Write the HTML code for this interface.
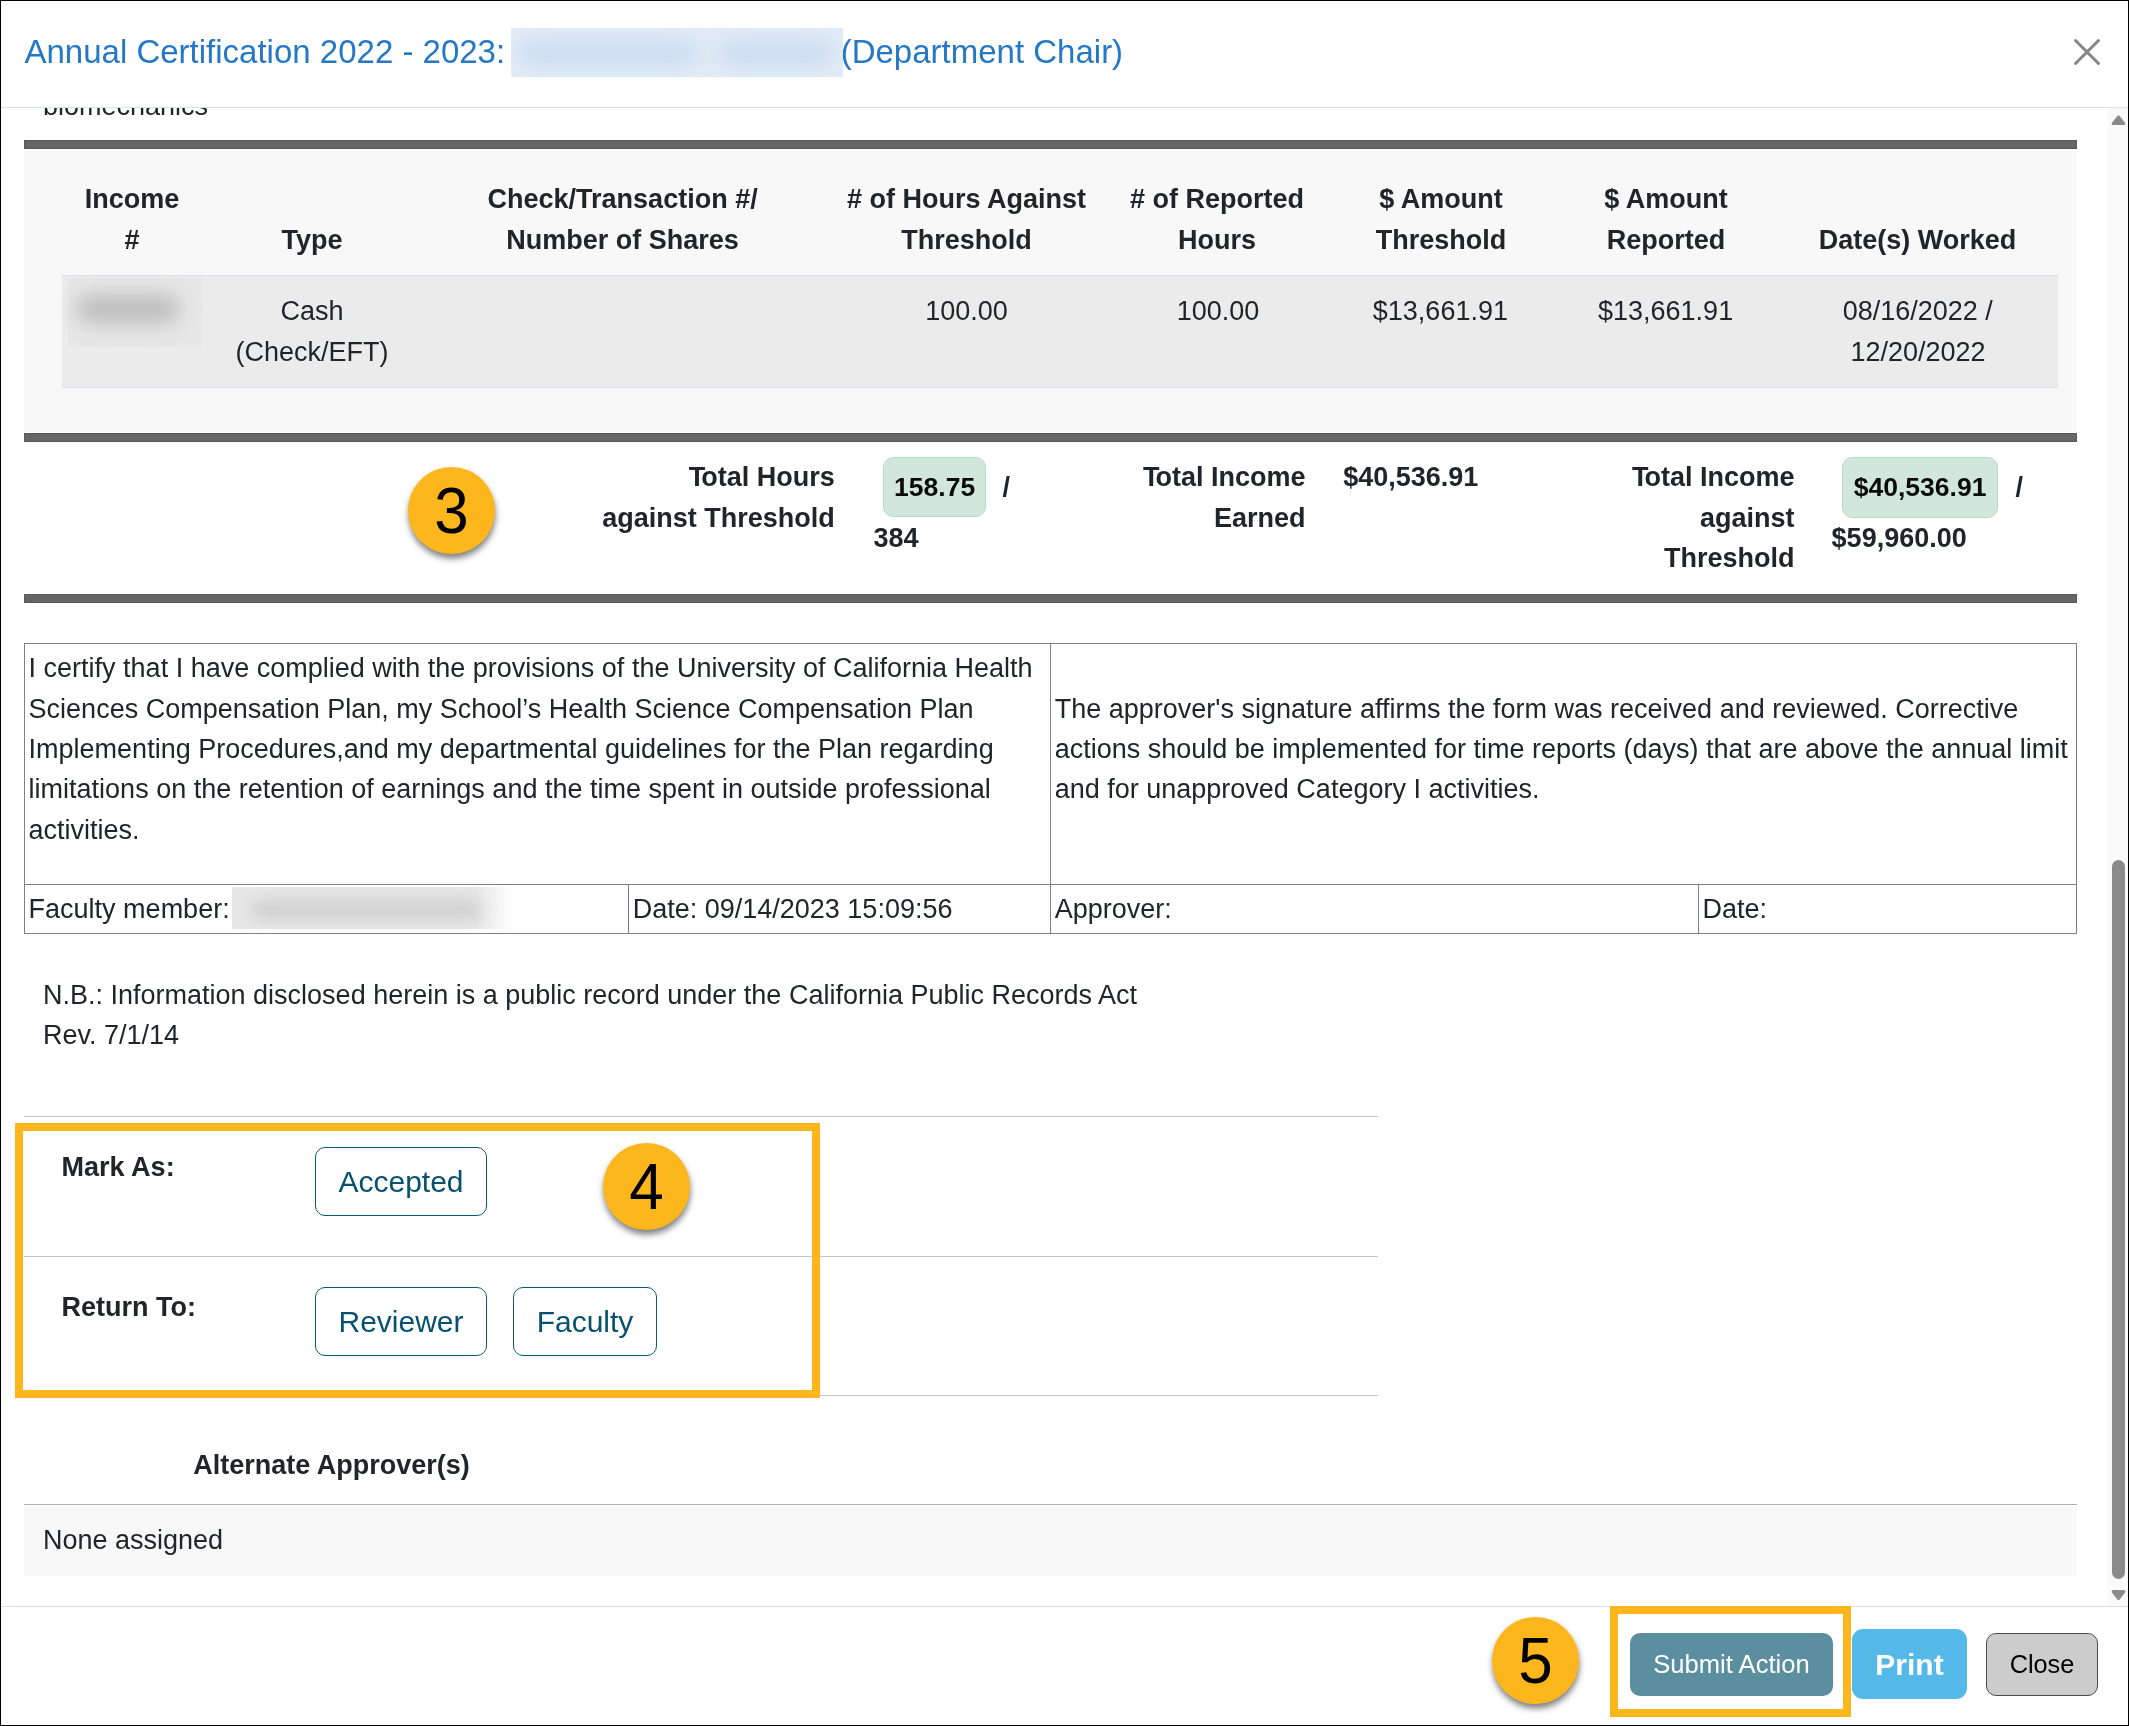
<!DOCTYPE html>
<html lang="en"><head><meta charset="utf-8"><title>Annual Certification</title>
<style>
html,body{margin:0;padding:0;background:#fff;}
body{width:2129px;height:1726px;overflow:hidden;position:relative;font-family:"Liberation Sans",sans-serif;color:#212529;}
.t{position:absolute;white-space:nowrap;margin:0;padding:0;}
.b{position:absolute;box-sizing:border-box;}
.btn{position:absolute;box-sizing:border-box;text-align:center;white-space:nowrap;}
.circ{position:absolute;border-radius:50%;background:#fdb71c;box-shadow:0.5px 4.5px 6px rgba(0,0,0,.5);text-align:center;color:#000;}
svg{position:absolute;overflow:visible;}
</style></head><body>
<div id="root" style="position:absolute;left:0;top:0;width:2129px;height:1726px;will-change:transform;">

<div class="b" style="left:0;top:108px;width:2129px;height:1498px;overflow:hidden;">
<div class="b" style="left:0;top:-108px;width:2129px;height:1726px;">
<div class="t" style="left:43.00px;top:86.24px;font-size:27px;line-height:40.5px;">biomechanics</div>
<div class="b" style="left:24.00px;top:140.00px;width:2053.00px;height:9.00px;background:#666666;border:1px solid #595959;"></div>
<div class="b" style="left:24.00px;top:150.00px;width:2053.00px;height:282.00px;background:#f8f8f8;"></div>
<div class="b" style="left:24.00px;top:433.00px;width:2053.00px;height:9.00px;background:#666666;border:1px solid #595959;"></div>
<div class="b" style="left:24.00px;top:594.00px;width:2053.00px;height:9.00px;background:#666666;border:1px solid #595959;"></div>
<div class="b" style="left:62.00px;top:275.00px;width:1996.00px;height:113.00px;background:#ebebeb;border-top:1px solid #dee2e6;border-bottom:1px solid #dee2e6;"></div>
<div class="t" style="left:132.00px;top:179.24px;font-size:27px;line-height:40.5px;font-weight:700;transform:translateX(-50%);">Income</div>
<div class="t" style="left:132.00px;top:219.74px;font-size:27px;line-height:40.5px;font-weight:700;transform:translateX(-50%);">#</div>
<div class="t" style="left:312.00px;top:219.74px;font-size:27px;line-height:40.5px;font-weight:700;transform:translateX(-50%);">Type</div>
<div class="t" style="left:622.60px;top:179.24px;font-size:27px;line-height:40.5px;font-weight:700;transform:translateX(-50%);">Check/Transaction #/</div>
<div class="t" style="left:622.60px;top:219.74px;font-size:27px;line-height:40.5px;font-weight:700;transform:translateX(-50%);">Number of Shares</div>
<div class="t" style="left:966.60px;top:179.24px;font-size:27px;line-height:40.5px;font-weight:700;transform:translateX(-50%);"># of Hours Against</div>
<div class="t" style="left:966.60px;top:219.74px;font-size:27px;line-height:40.5px;font-weight:700;transform:translateX(-50%);">Threshold</div>
<div class="t" style="left:1217.00px;top:179.24px;font-size:27px;line-height:40.5px;font-weight:700;transform:translateX(-50%);"># of Reported</div>
<div class="t" style="left:1217.00px;top:219.74px;font-size:27px;line-height:40.5px;font-weight:700;transform:translateX(-50%);">Hours</div>
<div class="t" style="left:1441.00px;top:179.24px;font-size:27px;line-height:40.5px;font-weight:700;transform:translateX(-50%);">$ Amount</div>
<div class="t" style="left:1441.00px;top:219.74px;font-size:27px;line-height:40.5px;font-weight:700;transform:translateX(-50%);">Threshold</div>
<div class="t" style="left:1666.00px;top:179.24px;font-size:27px;line-height:40.5px;font-weight:700;transform:translateX(-50%);">$ Amount</div>
<div class="t" style="left:1666.00px;top:219.74px;font-size:27px;line-height:40.5px;font-weight:700;transform:translateX(-50%);">Reported</div>
<div class="t" style="left:1917.50px;top:219.74px;font-size:27px;line-height:40.5px;font-weight:700;transform:translateX(-50%);">Date(s) Worked</div>
<div class="t" style="left:312.00px;top:291.24px;font-size:27px;line-height:40.5px;transform:translateX(-50%);">Cash</div>
<div class="t" style="left:312.00px;top:331.74px;font-size:27px;line-height:40.5px;transform:translateX(-50%);">(Check/EFT)</div>
<div class="t" style="left:966.60px;top:291.24px;font-size:27px;line-height:40.5px;transform:translateX(-50%);">100.00</div>
<div class="t" style="left:1218.00px;top:291.24px;font-size:27px;line-height:40.5px;transform:translateX(-50%);">100.00</div>
<div class="t" style="left:1440.40px;top:291.24px;font-size:27px;line-height:40.5px;transform:translateX(-50%);">$13,661.91</div>
<div class="t" style="left:1665.60px;top:291.24px;font-size:27px;line-height:40.5px;transform:translateX(-50%);">$13,661.91</div>
<div class="t" style="left:1917.80px;top:291.24px;font-size:27px;line-height:40.5px;transform:translateX(-50%);">08/16/2022 /</div>
<div class="t" style="left:1918.00px;top:331.74px;font-size:27px;line-height:40.5px;transform:translateX(-50%);">12/20/2022</div>
<div class="b" style="left:68.20px;top:278.20px;width:134.40px;height:68.50px;background:#e7e7e7;"></div>
<div class="b" style="left:76px;top:294px;width:104px;height:30px;border-radius:15px;background:#b8b8b8;filter:blur(10px);opacity:.85;"></div>
<div class="t" style="left:834.80px;top:457.44px;font-size:27px;line-height:40.5px;font-weight:700;transform:translateX(-100%);"><span style="letter-spacing:-3.9px">T</span>otal Hours</div>
<div class="t" style="left:834.80px;top:497.94px;font-size:27px;line-height:40.5px;font-weight:700;transform:translateX(-100%);">against Threshold</div>
<div class="t" style="left:1305.60px;top:457.44px;font-size:27px;line-height:40.5px;font-weight:700;transform:translateX(-100%);"><span style="letter-spacing:-3.9px">T</span>otal Income</div>
<div class="t" style="left:1305.60px;top:497.94px;font-size:27px;line-height:40.5px;font-weight:700;transform:translateX(-100%);">Earned</div>
<div class="t" style="left:1343.20px;top:457.44px;font-size:27px;line-height:40.5px;font-weight:700;">$40,536.91</div>
<div class="t" style="left:1794.50px;top:457.44px;font-size:27px;line-height:40.5px;font-weight:700;transform:translateX(-100%);"><span style="letter-spacing:-3.9px">T</span>otal Income</div>
<div class="t" style="left:1794.50px;top:497.94px;font-size:27px;line-height:40.5px;font-weight:700;transform:translateX(-100%);">against</div>
<div class="t" style="left:1794.50px;top:538.44px;font-size:27px;line-height:40.5px;font-weight:700;transform:translateX(-100%);">Threshold</div>
<div class="b" style="left:883.40px;top:457.40px;width:102.50px;height:60.00px;background:#d1e7dd;border:1px solid #badbcc;border-radius:10px;"></div>
<div class="t" style="left:934.60px;top:466.82px;font-size:26.5px;line-height:40.5px;font-weight:700;color:#0a0a0a;transform:translateX(-50%);">158.75</div>
<div class="t" style="left:1002.60px;top:467.34px;font-size:27px;line-height:40.5px;font-weight:700;">/</div>
<div class="t" style="left:873.40px;top:517.84px;font-size:27px;line-height:40.5px;font-weight:700;">384</div>
<div class="b" style="left:1842.10px;top:457.40px;width:156.00px;height:60.20px;background:#d1e7dd;border:1px solid #badbcc;border-radius:10px;"></div>
<div class="t" style="left:1920.10px;top:466.82px;font-size:26.5px;line-height:40.5px;font-weight:700;color:#0a0a0a;transform:translateX(-50%);">$40,536.91</div>
<div class="t" style="left:2015.60px;top:467.34px;font-size:27px;line-height:40.5px;font-weight:700;">/</div>
<div class="t" style="left:1831.60px;top:517.84px;font-size:27px;line-height:40.5px;font-weight:700;">$59,960.00</div>
<div class="b" style="left:24.20px;top:643.20px;width:2053.20px;height:291.00px;border:1px solid #808080;"></div>
<div class="b" style="left:24.20px;top:884.10px;width:2053.20px;height:1.00px;background:#808080;"></div>
<div class="b" style="left:1050.20px;top:643.20px;width:1.00px;height:291.00px;background:#808080;"></div>
<div class="b" style="left:628.20px;top:884.10px;width:1.00px;height:50.10px;background:#808080;"></div>
<div class="b" style="left:1697.80px;top:884.10px;width:1.00px;height:50.10px;background:#808080;"></div>
<div class="t" style="left:28.60px;top:648.14px;font-size:27px;line-height:40.5px;">I certify that I have complied with the provisions of the University of California Health</div>
<div class="t" style="left:28.60px;top:688.59px;font-size:27px;line-height:40.5px;">Sciences Compensation Plan, my School&rsquo;s Health Science Compensation Plan</div>
<div class="t" style="left:28.60px;top:729.04px;font-size:27px;line-height:40.5px;">Implementing Procedures,and my departmental guidelines for the Plan regarding</div>
<div class="t" style="left:28.60px;top:769.49px;font-size:27px;line-height:40.5px;">limitations on the retention of earnings and the time spent in outside professional</div>
<div class="t" style="left:28.60px;top:809.94px;font-size:27px;line-height:40.5px;">activities.</div>
<div class="t" style="left:1054.70px;top:688.59px;font-size:27px;line-height:40.5px;">The approver's signature affirms the form was received and reviewed. Corrective</div>
<div class="t" style="left:1054.70px;top:729.04px;font-size:27px;line-height:40.5px;">actions should be implemented for time reports (days) that are above the annual limit</div>
<div class="t" style="left:1054.70px;top:769.49px;font-size:27px;line-height:40.5px;">and for unapproved Category I activities.</div>
<div class="t" style="left:28.60px;top:889.14px;font-size:27px;line-height:40.5px;">Faculty member:</div>
<div class="t" style="left:632.70px;top:889.14px;font-size:27px;line-height:40.5px;">Date: 09/14/2023 15:09:56</div>
<div class="t" style="left:1054.70px;top:889.14px;font-size:27px;line-height:40.5px;">Approver:</div>
<div class="t" style="left:1702.40px;top:889.14px;font-size:27px;line-height:40.5px;">Date:</div>
<div class="b" style="left:231.9px;top:886.9px;width:283px;height:42px;background:linear-gradient(to right,#e7e7e7 0,#e7e7e7 86%,rgba(231,231,231,0) 100%);"></div>
<div class="b" style="left:250px;top:900px;width:232px;height:20px;border-radius:10px;background:#cecece;filter:blur(8px);opacity:.9;"></div>
<div class="t" style="left:43.00px;top:974.94px;font-size:27px;line-height:40.5px;">N.B.: Information disclosed herein is a public record under the California Public Records Act</div>
<div class="t" style="left:43.00px;top:1015.44px;font-size:27px;line-height:40.5px;">Rev. 7/1/14</div>
<div class="b" style="left:24.00px;top:1116.00px;width:1354.00px;height:1.00px;background:#c6c6c6;"></div>
<div class="b" style="left:24.00px;top:1256.00px;width:1354.00px;height:1.00px;background:#c6c6c6;"></div>
<div class="b" style="left:24.00px;top:1395.00px;width:1354.00px;height:1.00px;background:#c6c6c6;"></div>
<div class="t" style="left:61.60px;top:1146.84px;font-size:27px;line-height:40.5px;font-weight:700;">Mark As:</div>
<div class="t" style="left:61.60px;top:1287.24px;font-size:27px;line-height:40.5px;font-weight:700;">Return To:</div>
<div class="btn" style="left:315px;top:1147px;width:172px;height:69px;border:1px solid #0e5975;border-radius:10px;background:#fff;"></div>
<div class="t" style="left:401.00px;top:1160.15px;font-size:30px;line-height:44px;color:#06516d;transform:translateX(-50%);">Accepted</div>
<div class="btn" style="left:315px;top:1287px;width:172px;height:69px;border:1px solid #0e5975;border-radius:10px;background:#fff;"></div>
<div class="t" style="left:401.00px;top:1300.05px;font-size:30px;line-height:44px;color:#06516d;transform:translateX(-50%);">Reviewer</div>
<div class="btn" style="left:513px;top:1287px;width:144px;height:69px;border:1px solid #0e5975;border-radius:10px;background:#fff;"></div>
<div class="t" style="left:585.00px;top:1300.05px;font-size:30px;line-height:44px;color:#06516d;transform:translateX(-50%);">Faculty</div>
<div class="b" style="left:15.00px;top:1123.00px;width:805.00px;height:275.00px;border:8px solid #fdb71c;"></div>
<div class="circ" style="left:408.00px;top:467.10px;width:87px;height:87px;font-size:62px;line-height:87px;"><span style="display:inline-block;transform:scale(1,1.05);">3</span></div>
<div class="circ" style="left:603.00px;top:1143.00px;width:87px;height:87px;font-size:62px;line-height:87px;"><span style="display:inline-block;transform:scale(1,1.05);">4</span></div>
<div class="t" style="left:193.30px;top:1445.24px;font-size:27px;line-height:40.5px;font-weight:700;">Alternate Approver(s)</div>
<div class="b" style="left:24.00px;top:1504.00px;width:2053.00px;height:1.00px;background:#b0b0b0;"></div>
<div class="b" style="left:24.00px;top:1506.00px;width:2053.00px;height:70.00px;background:#f8f8f8;"></div>
<div class="t" style="left:43.00px;top:1519.84px;font-size:27px;line-height:40.5px;">None assigned</div>
</div></div>
<div class="b" style="left:2107.30px;top:108.00px;width:20.70px;height:1498.00px;background:#fafafa;"></div>
<div class="b" style="left:2112.00px;top:860.00px;width:13.00px;height:719.00px;background:#8b8b8b;border-radius:6.5px;"></div>
<svg style="left:2107px;top:108px" width="21" height="1498"><path d="M11.5 8.9 L16.9 15.6 L6.1 15.6 Z" fill="#8b8b8b" stroke="#8b8b8b" stroke-width="3" stroke-linejoin="round"/><path d="M11.5 1490.6 L16.9 1483.6 L6.1 1483.6 Z" fill="#8b8b8b" stroke="#8b8b8b" stroke-width="3" stroke-linejoin="round"/></svg>
<div class="t" style="left:24.50px;top:32.42px;font-size:33px;line-height:40px;color:#2578c5;">Annual Certification 2022 - 2023:</div>
<div class="t" style="left:840.70px;top:32.42px;font-size:33px;line-height:40px;color:#2578c5;">(Department Chair)</div>
<div class="b" style="left:511px;top:28px;width:332px;height:49px;background:#e4edf7;overflow:hidden;"><div class="b" style="left:6px;top:11px;width:182px;height:28px;border-radius:14px;background:#cadcf0;filter:blur(11px);"></div><div class="b" style="left:206px;top:11px;width:118px;height:28px;border-radius:14px;background:#cadcf0;filter:blur(11px);"></div></div>
<div class="b" style="left:0.00px;top:107.00px;width:2129.00px;height:1.00px;background:#dee2e6;"></div>
<svg style="left:2074px;top:39px" width="26" height="26"><path d="M1.5 1.5 L24.5 24.5 M24.5 1.5 L1.5 24.5" stroke="#858585" stroke-width="3" stroke-linecap="round" fill="none"/></svg>
<div class="b" style="left:0.00px;top:1606.00px;width:2129.00px;height:1.00px;background:#dee2e6;"></div>
<div class="circ" style="left:1492.10px;top:1616.90px;width:87px;height:87px;font-size:62px;line-height:88.6px;"><span style="display:inline-block;transform:scale(1,1.05);">5</span></div>
<div class="b" style="left:1610.00px;top:1606.00px;width:241.00px;height:111.00px;border:8px solid #fdb71c;"></div>
<div class="btn" style="left:1630px;top:1633px;width:203px;height:63px;background:#5b8e9f;border-radius:10px;color:#fff;font-size:25.6px;line-height:63px;">Submit Action</div>
<div class="btn" style="left:1852px;top:1629px;width:115px;height:70px;background:#54b9e8;border-radius:11px;color:#fff;font-weight:700;font-size:30px;line-height:71px;">Print</div>
<div class="btn" style="left:1986px;top:1633px;width:112px;height:63px;background:#cccccc;border:1px solid #4d4d4d;border-radius:10px;color:#000;font-size:25.3px;line-height:60.9px;">Close</div>
<div class="b" style="left:0;top:0;width:2129px;height:1726px;border:1px solid #000;border-left-width:1.3px;border-bottom-width:1.4px;border-right-width:1.2px;pointer-events:none;"></div>
</div></body></html>
